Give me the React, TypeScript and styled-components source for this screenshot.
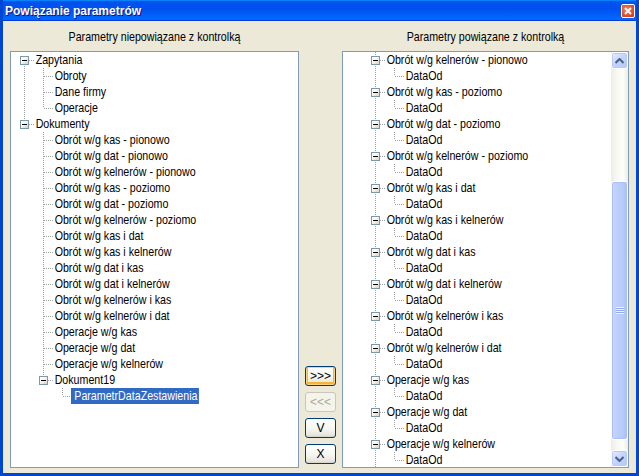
import React from 'react';
import styled, { createGlobalStyle, css } from 'styled-components';

const GlobalStyle = createGlobalStyle`
  html, body {
    margin: 0;
    padding: 0;
    background: #ece9d8;
  }

  body {
    font-family: "Liberation Sans", Arial, sans-serif;
    font-size: 12px;
  }
`;

interface TreeNode {
  label: string;
  children?: TreeNode[];
  selected?: boolean;
}

interface FlatRow {
  label: string;
  guides: boolean[];
  up: boolean;
  down: boolean;
  box: boolean;
  selected?: boolean;
}

// the dialog uses a narrow face; Liberation Sans squeezed to Arial Narrow widths
const FONT = `"Liberation Sans", Arial, sans-serif`;
const NARROW = 0.82;

const obroty = [
  'Obrót w/g kas - pionowo',
  'Obrót w/g dat - pionowo',
  'Obrót w/g kelnerów - pionowo',
  'Obrót w/g kas - poziomo',
  'Obrót w/g dat - poziomo',
  'Obrót w/g kelnerów - poziomo',
  'Obrót w/g kas i dat',
  'Obrót w/g kas i kelnerów',
  'Obrót w/g dat i kas',
  'Obrót w/g dat i kelnerów',
  'Obrót w/g kelnerów i kas',
  'Obrót w/g kelnerów i dat',
  'Operacje w/g kas',
  'Operacje w/g dat',
  'Operacje w/g kelnerów',
];

const unboundTree: TreeNode[] = [
  {
    label: 'Zapytania',
    children: [{ label: 'Obroty' }, { label: 'Dane firmy' }, { label: 'Operacje' }],
  },
  {
    label: 'Dokumenty',
    children: [
      ...obroty.map((label) => ({ label })),
      {
        label: 'Dokument19',
        children: [{ label: 'ParametrDataZestawienia', selected: true }],
      },
    ],
  },
];

const boundTree: TreeNode[] = obroty.slice(2).map((label) => ({
  label,
  children: [{ label: 'DataOd' }],
}));

// scrolled list: the root line runs past the first and last visible item
function flatten(nodes: TreeNode[], guides: boolean[] = [], scrolled = false): FlatRow[] {
  const rows: FlatRow[] = [];
  nodes.forEach((node, i) => {
    const isLast = i === nodes.length - 1 && !(scrolled && guides.length === 0);
    const isFirstRoot = guides.length === 0 && i === 0 && !scrolled;
    const hasKids = !!node.children?.length;
    rows.push({
      label: node.label,
      guides,
      up: !isFirstRoot,
      down: !isLast,
      box: hasKids,
      selected: node.selected,
    });
    if (hasKids) {
      rows.push(...flatten(node.children!, [...guides, !isLast], scrolled));
    }
  });
  return rows;
}

const dotsV = css`
  background: repeating-linear-gradient(to bottom, #a0a0a0 0 1px, transparent 1px 2px);
`;

const dotsH = css`
  background: repeating-linear-gradient(to right, #a0a0a0 0 1px, transparent 1px 2px);
`;

function Tree({ nodes, scrolled, indent }: { nodes: TreeNode[]; scrolled?: boolean; indent: number }) {
  const rows = flatten(nodes, [], scrolled);
  return (
    <TreeList $indent={indent}>
      {rows.map((row, i) => (
        <TreeRow key={i}>
          {row.guides.map((g, j) => (
            <GuideCell key={j} $line={g} />
          ))}
          <ConnectorCell $up={row.up} $down={row.down}>
            {row.box && <ExpandBox />}
          </ConnectorCell>
          <ItemLabel $selected={row.selected}>{row.label}</ItemLabel>
        </TreeRow>
      ))}
    </TreeList>
  );
}

function ChevronUp() {
  return (
    <svg width="9" height="6" viewBox="0 0 9 6">
      <path d="M0.5 5 L4.5 1 L8.5 5" fill="none" stroke="#4d6185" strokeWidth="2" />
    </svg>
  );
}

function ChevronDown() {
  return (
    <svg width="9" height="6" viewBox="0 0 9 6">
      <path d="M0.5 1 L4.5 5 L8.5 1" fill="none" stroke="#4d6185" strokeWidth="2" />
    </svg>
  );
}

export default function App() {
  return (
    <>
      <GlobalStyle />
      <Window>
        <TitleBar>
          <TitleText>Powiązanie parametrów</TitleText>
          <CloseButton>
            <svg width="8" height="8" viewBox="0 0 8 8">
              <path d="M1 1 L7 7 M7 1 L1 7" stroke="#fff" strokeWidth="1.8" />
            </svg>
          </CloseButton>
        </TitleBar>
        <Body>
          <Column>
            <ColumnLabel>Parametry niepowiązane z kontrolką</ColumnLabel>
            <Panel>
              <Tree nodes={unboundTree} indent={4} />
            </Panel>
          </Column>
          <ButtonColumn>
            <ActionButton $hot>&gt;&gt;&gt;</ActionButton>
            <ActionButton disabled>&lt;&lt;&lt;</ActionButton>
            <ActionButton>V</ActionButton>
            <ActionButton>X</ActionButton>
          </ButtonColumn>
          <Column>
            <ColumnLabel>Parametry powiązane z kontrolką</ColumnLabel>
            <Panel>
              <Tree nodes={boundTree} scrolled indent={23} />
              <ScrollBar>
                <ScrollButton>
                  <ChevronUp />
                </ScrollButton>
                <Track>
                  <Thumb $offset={112} $size={259}>
                    <Grip />
                  </Thumb>
                </Track>
                <ScrollButton>
                  <ChevronDown />
                </ScrollButton>
              </ScrollBar>
            </Panel>
          </Column>
        </Body>
      </Window>
    </>
  );
}

const Window = styled.div`
  display: flex;
  flex-direction: column;
  width: 639px;
  height: 476px;
  box-sizing: border-box;
  border: 3px solid #0046d5;
  border-top: none;
  background: #ece9d8;
  overflow: hidden;
`;

const TitleBar = styled.div`
  display: flex;
  align-items: center;
  justify-content: space-between;

  height: 21px;
  margin: 0 -3px;
  padding: 0 4px 0 5px;

  background: linear-gradient(
    180deg,
    #0997ff,
    #0053ee 8%,
    #0050ee 40%,
    #0066ff 88%,
    #0066ff 93%,
    #005bff 95%,
    #003dd7 96%,
    #003dd7
  );
`;

const TitleText = styled.span`
  font-family: ${FONT};
  font-weight: bold;
  font-size: 12px;
  color: #fff;
  text-shadow: 1px 1px #0f1089;
`;

const CloseButton = styled.div`
  display: flex;
  align-items: center;
  justify-content: center;

  width: 14px;
  height: 14px;
  box-sizing: border-box;

  border: 1px solid #fff;
  border-radius: 2px;
  background: radial-gradient(circle at 40% 40%, #f08a67, #d9461f 70%, #c13a16);
`;

const Body = styled.div`
  flex: 1;
  display: grid;
  grid-template-columns: 289px 43px 287px;
  padding: 8px 4px 4px 7px;
`;

const Column = styled.div`
  display: flex;
  flex-direction: column;
  row-gap: 6px;
`;

const ColumnLabel = styled.div`
  height: 16px;
  line-height: 16px;
  text-align: center;
  white-space: nowrap;
  transform: scaleX(${NARROW});

  font-family: ${FONT};
  font-size: 13px;
  color: #000;
`;

const Panel = styled.div`
  display: flex;
  height: 417px;
  box-sizing: border-box;
  overflow: hidden;

  border: 1px solid #7f9db9;
  background: #fff;
`;

const TreeList = styled.div<{ $indent: number }>`
  flex: 1;
  display: flex;
  flex-direction: column;
  min-width: 0;
  padding-left: ${({ $indent }) => $indent}px;
`;

const TreeRow = styled.div`
  display: flex;
  align-items: center;
  height: 16px;
`;

const GuideCell = styled.span<{ $line: boolean }>`
  position: relative;
  flex: none;
  width: 19px;
  height: 16px;

  &::before {
    content: '';
    display: ${({ $line }) => ($line ? 'block' : 'none')};
    position: absolute;
    left: 9px;
    top: 0;
    width: 1px;
    height: 16px;
    ${dotsV};
  }
`;

const ConnectorCell = styled.span<{ $up: boolean; $down: boolean }>`
  position: relative;
  flex: none;
  width: 19px;
  height: 16px;

  &::before {
    content: '';
    position: absolute;
    left: 9px;
    top: ${({ $up }) => ($up ? 0 : 8)}px;
    bottom: ${({ $down }) => ($down ? 0 : 8)}px;
    width: 1px;
    ${dotsV};
  }

  &::after {
    content: '';
    position: absolute;
    left: 10px;
    top: 8px;
    width: 9px;
    height: 1px;
    ${dotsH};
  }
`;

const ExpandBox = styled.span`
  position: absolute;
  z-index: 1;
  left: 5px;
  top: 4px;
  width: 9px;
  height: 9px;
  box-sizing: border-box;

  border: 1px solid #7a99ac;
  background: linear-gradient(135deg, #ffffff 30%, #d8d2c4);

  &::after {
    content: '';
    position: absolute;
    left: 1px;
    top: 3px;
    width: 5px;
    height: 1px;
    background: #000;
  }
`;

const ItemLabel = styled.span<{ $selected?: boolean }>`
  display: inline-block;
  flex: none;
  height: 16px;
  line-height: 16px;
  padding: 0 2px;
  white-space: nowrap;
  transform: scaleX(${NARROW});
  transform-origin: left center;

  font-family: ${FONT};
  font-size: 13px;
  color: #000;

  ${({ $selected }) =>
    $selected &&
    css`
      margin-left: -1px;
      padding: 0 2px 0 4px;
      background: #316ac5;
      color: #fff;
    `}
`;

const ButtonColumn = styled.div`
  display: flex;
  flex-direction: column;
  justify-content: flex-end;
  align-items: center;
  row-gap: 6px;
  padding-bottom: 5px;
`;

const ActionButton = styled.button<{ $hot?: boolean }>`
  width: 31px;
  height: 20px;
  padding: 0;
  box-sizing: border-box;

  border: 1px solid #003c74;
  border-radius: 3px;
  background: linear-gradient(to bottom, #ffffff 0%, #f6f6f2 55%, #e6e5dd 90%, #d6d0c5 100%);

  font-family: ${FONT};
  font-size: 12px;
  color: #000;

  ${({ $hot }) =>
    $hot &&
    css`
      box-shadow: inset 0 0 0 1px #fbd27c, inset 0 -1px 0 2px #f7b337;
    `}

  &:disabled {
    border-color: #c9c7ba;
    background: #f5f4ea;
    color: #aca899;
  }
`;

const ScrollBar = styled.div`
  display: flex;
  flex-direction: column;
  flex: none;
  width: 17px;
  background: linear-gradient(to right, #eeede5, #f7f7f2 30%, #fdfdfa 70%, #eeede5);
`;

const ScrollButton = styled.div`
  display: flex;
  align-items: center;
  justify-content: center;

  width: 17px;
  height: 17px;
  box-sizing: border-box;

  border: 1px solid #fff;
  border-radius: 3px;
  box-shadow: inset 0 0 0 1px #b7c9f6;
  background: linear-gradient(135deg, #e1eafe 10%, #c3d3fd 50%, #b3c7f7);
`;

const Track = styled.div`
  flex: 1;
  display: flex;
  flex-direction: column;
`;

const Thumb = styled.div<{ $offset: number; $size: number }>`
  display: flex;
  align-items: center;
  justify-content: center;

  margin-top: ${({ $offset }) => $offset}px;
  height: ${({ $size }) => $size}px;
  box-sizing: border-box;

  border: 1px solid #fff;
  border-radius: 3px;
  box-shadow: inset 0 0 0 1px #a9bff5;
  background: linear-gradient(to right, #c9d7fd, #bccdfb 40%, #b8cbfa 70%, #a9bdf2);
`;

const Grip = styled.span`
  width: 8px;
  height: 7px;
  background: repeating-linear-gradient(to bottom, #eef3fe 0 1px, #8faaf0 1px 2px);
`;
